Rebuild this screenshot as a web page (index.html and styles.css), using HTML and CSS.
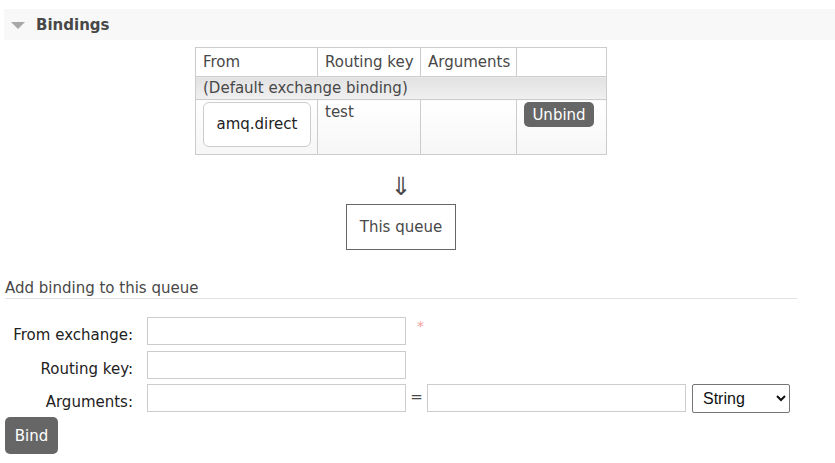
FILE: index.html
```html
<!DOCTYPE html>
<html lang="en">
<head>
  <meta charset="UTF-8">
  <title>Bindings</title>
  <link rel="stylesheet" href="styles.css">
</head>
<body>
  <div class="section">
    <h2 class="section-title"><span class="arrow-down"></span>Bindings</h2>

    <div class="content">
      <div class="bindings-wrapper">
        <table class="list">
          <thead>
            <tr>
              <th class="col-from">From</th>
              <th class="col-key">Routing key</th>
              <th class="col-args">Arguments</th>
              <th class="col-act"></th>
            </tr>
          </thead>
          <tbody>
            <tr class="default-row">
              <td colspan="4">(Default exchange binding)</td>
            </tr>
            <tr class="data-row">
              <td><span class="exchange">amq.direct</span></td>
              <td>test</td>
              <td></td>
              <td><button class="btn btn-small">Unbind</button></td>
            </tr>
          </tbody>
        </table>

        <div class="arrow">&dArr;</div>
        <div class="this-queue">This queue</div>
      </div>

      <h3 class="sub-title">Add binding to this queue</h3>

      <form class="bind-form" onsubmit="return false">
        <div class="form-row">
          <label>From exchange:</label>
          <input type="text" class="field">
          <span class="mand">*</span>
        </div>
        <div class="form-row">
          <label>Routing key:</label>
          <input type="text" class="field">
        </div>
        <div class="form-row">
          <label>Arguments:</label>
          <input type="text" class="field">
          <span class="equals">=</span>
          <input type="text" class="field">
          <select class="type-select">
            <option>String</option>
            <option>Number</option>
            <option>Boolean</option>
          </select>
        </div>
        <button class="btn btn-bind">Bind</button>
      </form>
    </div>
  </div>
</body>
</html>
```

FILE: styles.css
```css
body{
  margin: 0;
  font: 15px/17px "DejaVu Sans", Verdana, sans-serif;
  color: #484848;
  background: #fff;
}
.section{
  padding: 9px 0 0 4px;
}
.section-title{
  margin: 0;
  height: 31px;
  background: #f8f8f8;
  display: flex;
  align-items: center;
  padding: 2px 0 0 7px;
  box-sizing: border-box;
  font-size: 15px;
  font-weight: bold;
  color: #484848;
}
.arrow-down{
  width: 0;
  height: 0;
  border-left: 7px solid transparent;
  border-right: 7px solid transparent;
  border-top: 7px solid #a8a8a8;
  margin-right: 11px;
}
.content{
  width: 792px;
  margin-left: 1px;
}
.bindings-wrapper{
  display: flex;
  flex-direction: column;
  align-items: center;
  padding-top: 7px;
}
.list{
  border-collapse: collapse;
  border: 1px solid #ccc;
  table-layout: fixed;
  width: 411px;
}
.list th,
.list td{
  border: 1px solid #ccc;
  text-align: left;
  vertical-align: top;
  font-weight: normal;
  white-space: nowrap;
}
.list th{
  padding: 6px 7px 5px;
  background: #fff;
  box-sizing: border-box;
}
.col-from{ width: 122px; }
.col-key{ width: 103px; }
.col-args{ width: 96px; }
.col-act{ width: 90px; }
.default-row td{
  padding: 3px 7px 2px;
  background: linear-gradient(#e2e2e2, #f0f0f0);
}
.data-row td{
  padding: 2px 7px 5px;
  height: 45px;
  background: linear-gradient(#fff, #f6f6f6);
}
.data-row td:nth-child(2){
  padding-top: 4px;
}
.exchange{
  display: flex;
  align-items: center;
  justify-content: center;
  width: 106px;
  height: 43px;
  background: #fff;
  border: 1px solid #ccc;
  border-radius: 6px;
  color: #222;
}
.btn{
  border: none;
  background: #666;
  color: #fff;
  font-family: "DejaVu Sans", Verdana, sans-serif;
  border-radius: 5px;
  cursor: pointer;
}
.btn-small{
  width: 70px;
  height: 25px;
  font-size: 15px;
  padding: 0;
}
.arrow{
  font-size: 25px;
  line-height: 26px;
  margin-top: 19px;
  color: #484848;
}
.this-queue{
  margin-top: 4px;
  width: 108px;
  height: 44px;
  border: 1px solid #666;
  display: flex;
  align-items: center;
  justify-content: center;
}
.sub-title{
  margin: 30px 0 0;
  padding-bottom: 1px;
  border-bottom: 1px solid #e2e2e2;
  font-size: 15px;
  font-weight: normal;
  color: #484848;
}
.bind-form{
  padding-top: 18px;
}
.form-row{
  display: flex;
  align-items: flex-start;
  height: 28px;
  margin-bottom: 5px;
}
.form-row:first-child{
  margin-bottom: 6px;
}
.form-row label{
  width: 128px;
  text-align: right;
  margin-right: 14px;
  color: #222;
  padding-top: 10px;
}
.field{
  width: 255px;
  height: 24px;
  border: 1px solid #ccc;
  padding: 1px;
  margin: 0;
}
.mand{
  color: #f49d9d;
  margin-left: 11px;
  margin-top: 1px;
  font-size: 14px;
}
.equals{
  width: 21px;
  text-align: center;
  padding-top: 5px;
}
.type-select{
  margin-left: 6px;
  width: 98px;
  height: 29px;
  font: 16px "Liberation Sans", Arial, sans-serif;
  color: #111;
  border: 1px solid #767676;
  border-radius: 2px;
  background: #fff;
  padding-left: 6px;
}
.btn-bind{
  width: 53px;
  height: 37px;
  font-size: 15px;
}
```
